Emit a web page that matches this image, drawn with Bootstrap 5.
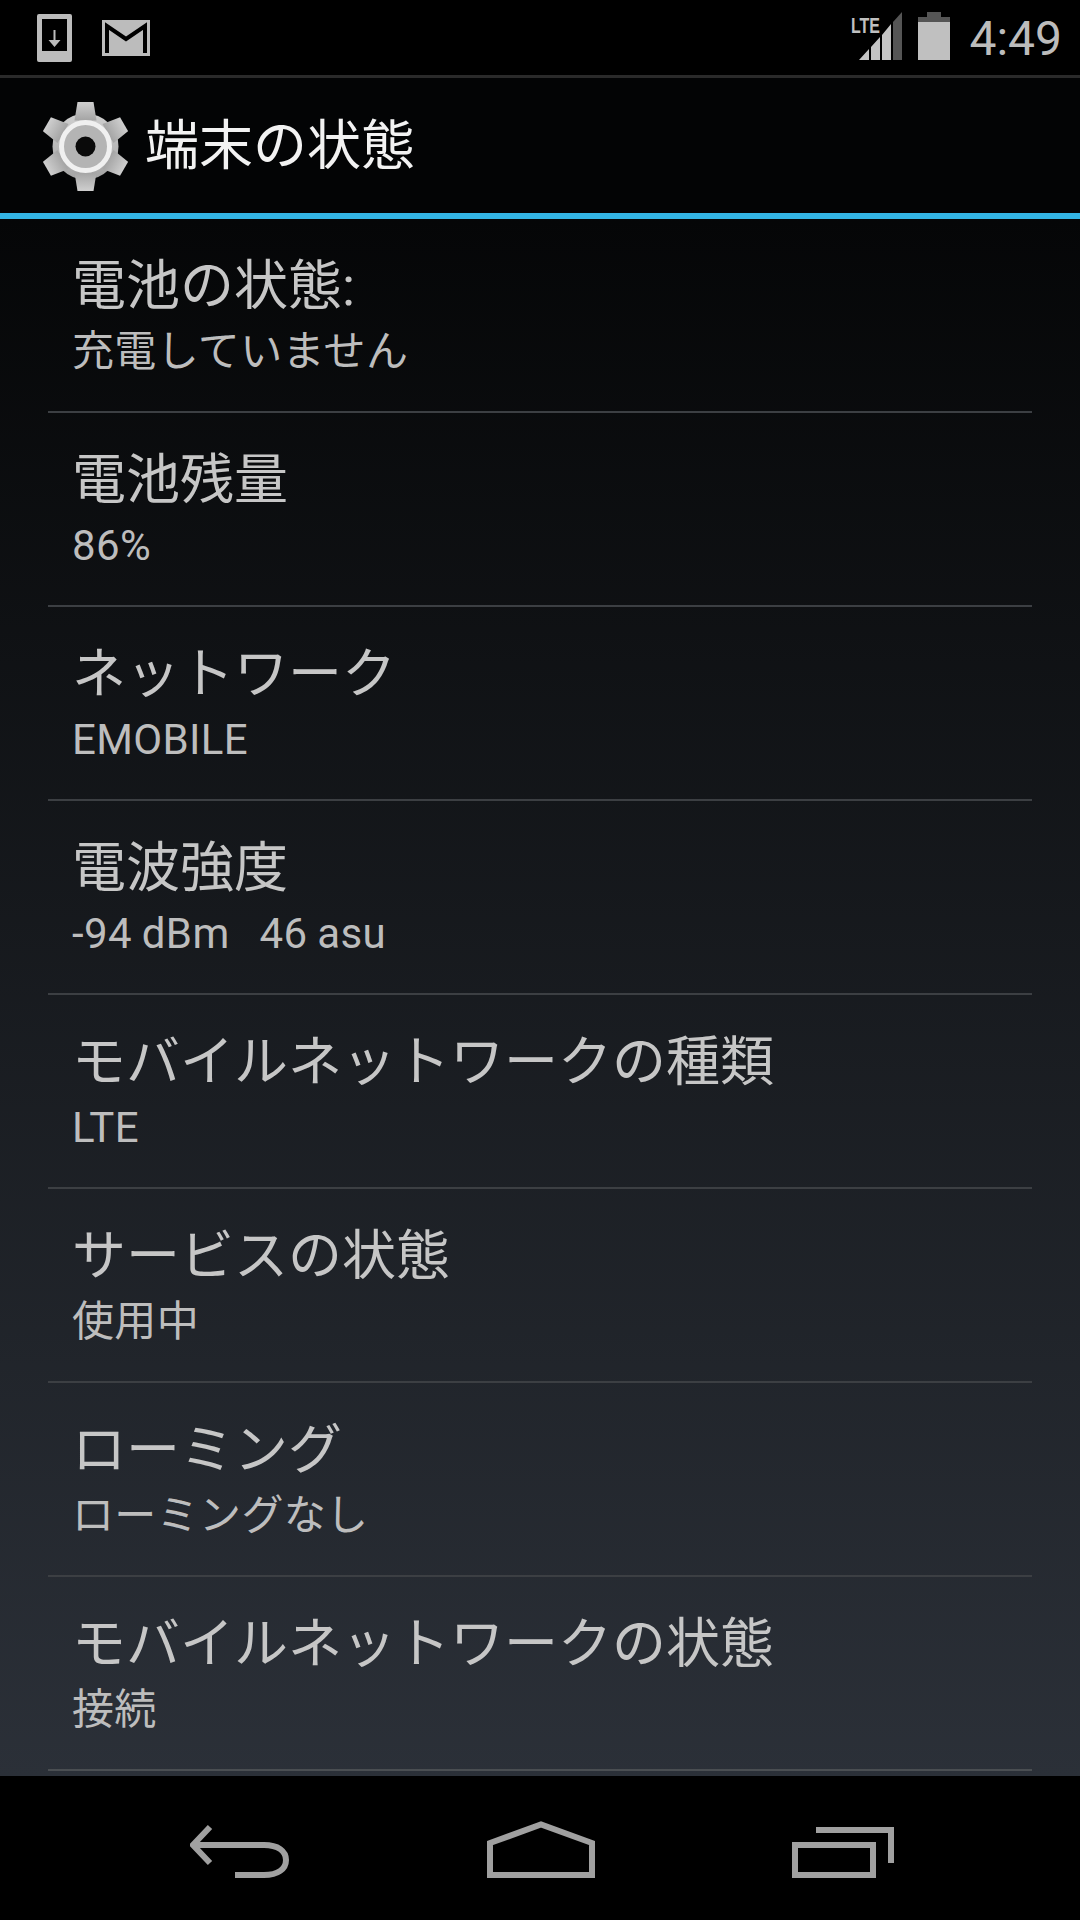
<!DOCTYPE html>
<html lang="ja">
<head>
  <meta charset="UTF-8" />
  <meta name="viewport" content="width=device-width, initial-scale=1" />
  <title>端末の状態</title>
  <link href="https://cdn.jsdelivr.net/npm/bootstrap@5.3.1/dist/css/bootstrap.min.css" rel="stylesheet" />
  <style>
    html, body { background: #000; }
    body { font-family: Roboto, "Noto Sans CJK JP", sans-serif; }
    .phone-screen { width: 1080px; height: 1920px; overflow: hidden; }

    .status-strip { height: 78px; background: #000; border-bottom: 3px solid #2a2a2a; padding: 0 18px 0 37px; }
    .status-left { gap: 30px; }
    .status-right { gap: 16px; }
    .status-glyph { margin-bottom: 3px; }
    .clock-text { font-size: 48px; line-height: 1; color: #bcbcbc; margin-left: 3px; margin-top: 2px; }
    .lte-text { font-family: "Liberation Sans", sans-serif; font-size: 22px; font-weight: 700; fill: #c0c0c0; }

    .title-strip { height: 141px; background: #030405; border-bottom: 6px solid #33b5e5; padding: 2px 0 0 43px; gap: 17px; }
    .title-text { font-size: 54px; line-height: 1; color: #f2f2f2; }

    .status-list { background: linear-gradient(#050607, #2b3038); min-height: 0; padding: 0 48px; }
    .status-list .list-group-item { height: 194px; padding: 36px 24px 0; background: transparent; color: #c6c6c6; border: 0; border-bottom: 2px solid #3c3f43; }
    .status-list .list-group-item:last-child { border-bottom: 2px solid #4a4e52; }
    .row-title { font-size: 54px; line-height: 64px; color: #c6c6c6; }
    .row-value { font-size: 42px; line-height: 50px; margin-top: 8px; color: #bdbdbd; letter-spacing: .35px; word-spacing: -.8px; white-space: pre; }

    .nav-strip { height: 144px; background: #000; padding-left: 190px; padding-right: 186px; padding-top: 45px; }
  </style>
</head>
<body class="m-0">
  <div class="phone-screen d-flex flex-column">

    <!-- status bar -->
    <div class="status-strip d-flex align-items-center justify-content-between flex-shrink-0">
      <div class="status-left d-flex align-items-center">
        <svg width="35" height="48" viewBox="0 0 35 48">
          <path fill="#bcbcbc" fill-rule="evenodd" d="M2 0H33a2 2 0 0 1 2 2V46a2 2 0 0 1-2 2H2a2 2 0 0 1-2-2V2a2 2 0 0 1 2-2ZM5 5V37H30V5Z" />
          <path fill="#bcbcbc" d="M16.500 16h2v10h5l-6 7-6-7h5Z" />
        </svg>
        <svg width="48" height="36" viewBox="0 0 48 36">
          <path fill="#bcbcbc" d="M0 0H48V36H0Z" />
          <path fill="none" stroke="#000" stroke-width="4" d="M5 33V6L24 19 43 6V33" />
        </svg>
      </div>
      <div class="status-right d-flex align-items-center">
        <svg class="status-glyph" width="51" height="48" viewBox="0 0 51 48">
          <text class="lte-text" x="0" y="21" textLength="29" lengthAdjust="spacingAndGlyphs">LTE</text>
          <path fill="#c4c4c4" d="M8 48 18 37V48ZM20 48V35L29 25V48ZM31 48V23L40 12V48Z" />
          <path fill="#555" d="M42 48V10L51 0V48Z" />
        </svg>
        <svg class="status-glyph" width="32" height="48" viewBox="0 0 32 48">
          <path fill="#555" d="M9 0H23V5H32V20H0V5H9Z" />
          <path fill="#c0c0c0" d="M0 10H32V48H0Z" />
        </svg>
        <span class="clock-text">4:49</span>
      </div>
    </div>

    <!-- action bar -->
    <div class="title-strip d-flex align-items-center flex-shrink-0">
      <svg width="85" height="89" viewBox="-42.500 -44.500 85 89">
        <defs>
          <linearGradient id="gearFill" x1="0" y1="0" x2="0" y2="1">
            <stop offset="0" stop-color="#cfcfcf" />
            <stop offset="1" stop-color="#a4a4a4" />
          </linearGradient>
        </defs>
        <g fill="url(#gearFill)">
          <circle r="33" />
          <path d="M-8-44.500H8L11-26H-11Z" />
          <path transform="rotate(60)" d="M-8-44.500H8L11-26H-11Z" />
          <path transform="rotate(120)" d="M-8-44.500H8L11-26H-11Z" />
          <path transform="rotate(180)" d="M-8-44.500H8L11-26H-11Z" />
          <path transform="rotate(240)" d="M-8-44.500H8L11-26H-11Z" />
          <path transform="rotate(300)" d="M-8-44.500H8L11-26H-11Z" />
        </g>
        <circle r="24" fill="#b4b4b4" stroke="#f0f0f0" stroke-width="5" />
        <circle r="10" fill="#0a0a0a" />
      </svg>
      <span class="title-text">端末の状態</span>
    </div>

    <!-- items -->
    <div class="status-list flex-fill overflow-hidden">
      <div class="list-group list-group-flush">
        <div class="list-group-item">
          <div class="row-title">電池の状態:</div>
          <div class="row-value">充電していません</div>
        </div>
        <div class="list-group-item">
          <div class="row-title">電池残量</div>
          <div class="row-value">86%</div>
        </div>
        <div class="list-group-item">
          <div class="row-title">ネットワーク</div>
          <div class="row-value">EMOBILE</div>
        </div>
        <div class="list-group-item">
          <div class="row-title">電波強度</div>
          <div class="row-value">-94 dBm   46 asu</div>
        </div>
        <div class="list-group-item">
          <div class="row-title">モバイルネットワークの種類</div>
          <div class="row-value">LTE</div>
        </div>
        <div class="list-group-item">
          <div class="row-title">サービスの状態</div>
          <div class="row-value">使用中</div>
        </div>
        <div class="list-group-item">
          <div class="row-title">ローミング</div>
          <div class="row-value">ローミングなし</div>
        </div>
        <div class="list-group-item">
          <div class="row-title">モバイルネットワークの状態</div>
          <div class="row-value">接続</div>
        </div>
      </div>
    </div>

    <!-- nav bar -->
    <div class="nav-strip d-flex align-items-start justify-content-between flex-shrink-0">
      <svg width="99" height="57" viewBox="0 0 99 57">
        <path fill="none" stroke="#a0a0a0" stroke-width="6" d="M5 24H74C88 24 96 30 96 39S88 54 74 54H45" />
        <path fill="none" stroke="#a0a0a0" stroke-width="6" d="M20 6 3 24 20 42" />
      </svg>
      <svg width="108" height="57" viewBox="0 0 108 57">
        <path fill="none" stroke="#a0a0a0" stroke-width="6" d="M3 54V22L54 3.500 105 22V54Z" />
      </svg>
      <svg width="102" height="57" viewBox="0 0 102 57">
        <path fill="none" stroke="#a0a0a0" stroke-width="6" d="M3 24H81V54H3Z" />
        <path fill="none" stroke="#a0a0a0" stroke-width="6" d="M24 9H99V42" />
      </svg>
    </div>

  </div>
  <script src="https://cdn.jsdelivr.net/npm/bootstrap@5.3.1/dist/js/bootstrap.bundle.min.js"></script>
</body>
</html>
